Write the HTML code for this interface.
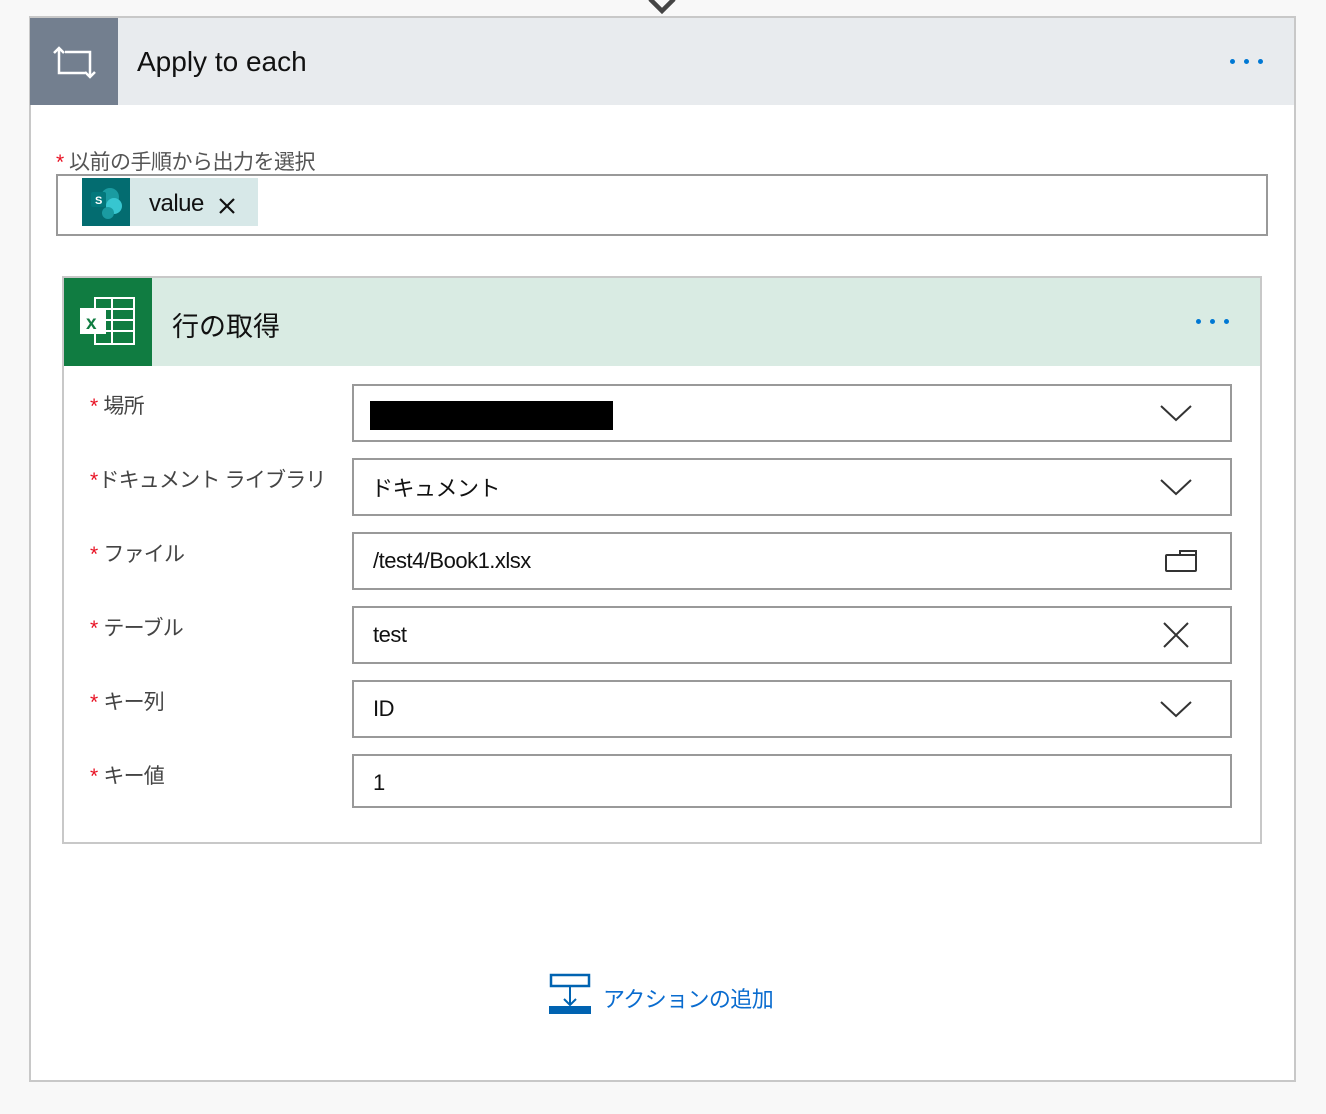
<!DOCTYPE html>
<html><head><meta charset="utf-8"><style>
*{box-sizing:border-box;margin:0;padding:0}
body{width:1326px;height:1114px;background:#f8f8f8;position:relative;overflow:hidden;font-family:"Liberation Sans","Noto Sans CJK JP",sans-serif}
.abs{position:absolute}
.lbl{position:absolute;left:90px;font-size:21px;color:#444;line-height:1;letter-spacing:-0.8px}
.lbl b{color:#e81123;font-weight:normal;margin-right:1px}
.inp{position:absolute;left:352px;width:880px;border:2px solid #999;background:#fff;font-size:22px;color:#111;padding-left:19px;display:flex;align-items:center;letter-spacing:-0.5px}
.ic{position:absolute;right:38px;top:50%;transform:translateY(-50%)}
.dots{position:absolute;display:flex;gap:9px}
.dots i{width:5px;height:5px;border-radius:50%;background:#0078d4;display:block}
</style></head><body>
<svg class="abs" style="left:646px;top:0" width="32" height="16"><path d="M4 -1 L16 11 L28 -1" stroke="#444" stroke-width="4.5" fill="none"/></svg>
<div class="abs" style="left:29px;top:16px;width:1267px;height:1066px;border:2px solid #c8c8c8;background:#fff"></div>
<div class="abs" style="left:31px;top:18px;width:1263px;height:87px;background:#e8ebee"></div>
<div class="abs" style="left:30px;top:18px;width:88px;height:87px;background:#737f8f"></div>
<svg class="abs" style="left:52px;top:44px" width="46" height="36" fill="none" stroke="#fff" stroke-width="2.5"><path d="M7 4 V29 H33 M2 9 L7 4 L12 9 M38 33 V8 H13 M33 28 L38 33 L43 28"/></svg>
<div class="abs" style="left:137px;top:46px;font-size:28px;color:#111">Apply to each</div>
<div class="dots" style="left:1230px;top:59px"><i></i><i></i><i></i></div>
<div class="abs" style="left:56px;top:146px;font-size:21px;color:#555;letter-spacing:-0.5px"><span style="color:#e81123">*</span> 以前の手順から出力を選択</div>
<div class="abs" style="left:56px;top:174px;width:1212px;height:62px;border:2px solid #999;background:#fff"></div>
<div class="abs" style="left:82px;top:178px;width:176px;height:48px;background:#d7e8e8"></div>
<div class="abs" style="left:82px;top:178px;width:48px;height:48px;background:#036c70"></div>
<svg class="abs" style="left:88px;top:184px" width="38" height="38"><circle cx="22" cy="13" r="9" fill="#1a9ba1"/><circle cx="26" cy="22" r="8" fill="#37c6d0"/><circle cx="20" cy="29" r="6" fill="#1a9ba1"/><rect x="3" y="8" width="15" height="15" rx="2" fill="#03787c"/><text x="7" y="20" font-size="11" fill="#fff" font-weight="bold" font-family="Liberation Sans">S</text></svg>
<div class="abs" style="left:149px;top:190px;font-size:24px;color:#111;letter-spacing:-0.5px">value</div>
<svg class="abs" style="left:218px;top:197px" width="18" height="18" stroke="#111" stroke-width="2.2"><path d="M2 2 L16 16 M16 2 L2 16"/></svg>

<div class="abs" style="left:62px;top:276px;width:1200px;height:568px;border:2px solid #c8c8c8;background:#fff"></div>
<div class="abs" style="left:64px;top:278px;width:1196px;height:88px;background:#d9ebe3"></div>
<div class="abs" style="left:64px;top:278px;width:88px;height:88px;background:#107c41"></div>
<svg class="abs" style="left:78px;top:296px" width="60" height="52" fill="none" stroke="#fff" stroke-width="2"><rect x="17" y="2" width="39" height="46"/><path d="M17 13H56M17 24H56M17 35H56M34 2V48"/><rect x="2" y="12" width="26" height="26" fill="#fff" stroke="none"/><text x="8" y="33" font-size="19" fill="#107c41" stroke="none" font-weight="bold" font-family="Liberation Sans">x</text></svg>
<div class="abs" style="left:172px;top:305px;font-size:27px;color:#111">行の取得</div>
<div class="dots" style="left:1196px;top:319px"><i></i><i></i><i></i></div>

<div class="lbl" style="top:396px"><b>*</b> 場所</div>
<div class="lbl" style="top:470px"><b>*</b>ドキュメント ライブラリ</div>
<div class="lbl" style="top:544px"><b>*</b> ファイル</div>
<div class="lbl" style="top:618px"><b>*</b> テーブル</div>
<div class="lbl" style="top:692px"><b>*</b> キー列</div>
<div class="lbl" style="top:766px"><b>*</b> キー値</div>

<div class="inp" style="top:384px;height:58px"><div style="width:243px;height:29px;background:#000;margin-left:-3px;margin-top:4px"></div><svg class="ic" width="32" height="18" fill="none" stroke="#333" stroke-width="2"><path d="M1 2 L16 16 L31 2"/></svg></div>
<div class="inp" style="top:458px;height:58px;padding-left:17px">ドキュメント<svg class="ic" width="32" height="18" fill="none" stroke="#333" stroke-width="2"><path d="M1 2 L16 16 L31 2"/></svg></div>
<div class="inp" style="top:532px;height:58px">/test4/Book1.xlsx<svg class="ic" style="right:32px" width="34" height="26" fill="none" stroke="#333" stroke-width="2"><rect x="2" y="7" width="30" height="16" rx="1"/><path d="M16 7 V3 H32 V7"/></svg></div>
<div class="inp" style="top:606px;height:58px">test<svg class="ic" style="right:41px" width="26" height="26" fill="none" stroke="#333" stroke-width="2"><path d="M1 1 L25 25 M25 1 L1 25"/></svg></div>
<div class="inp" style="top:680px;height:58px">ID<svg class="ic" width="32" height="18" fill="none" stroke="#333" stroke-width="2"><path d="M1 2 L16 16 L31 2"/></svg></div>
<div class="inp" style="top:754px;height:54px;padding-top:4px">1</div>

<svg class="abs" style="left:549px;top:973px" width="42" height="42"><rect x="2" y="2" width="38" height="11" fill="none" stroke="#0063b1" stroke-width="2.5"/><path d="M21 13 V32 M15 26 L21 32 L27 26" fill="none" stroke="#0063b1" stroke-width="2"/><rect x="0" y="33" width="42" height="8" fill="#0063b1"/></svg>
<div class="abs" style="left:603px;top:982px;font-size:22px;color:#0a6ccf;letter-spacing:-0.6px">アクションの追加</div>
</body></html>
